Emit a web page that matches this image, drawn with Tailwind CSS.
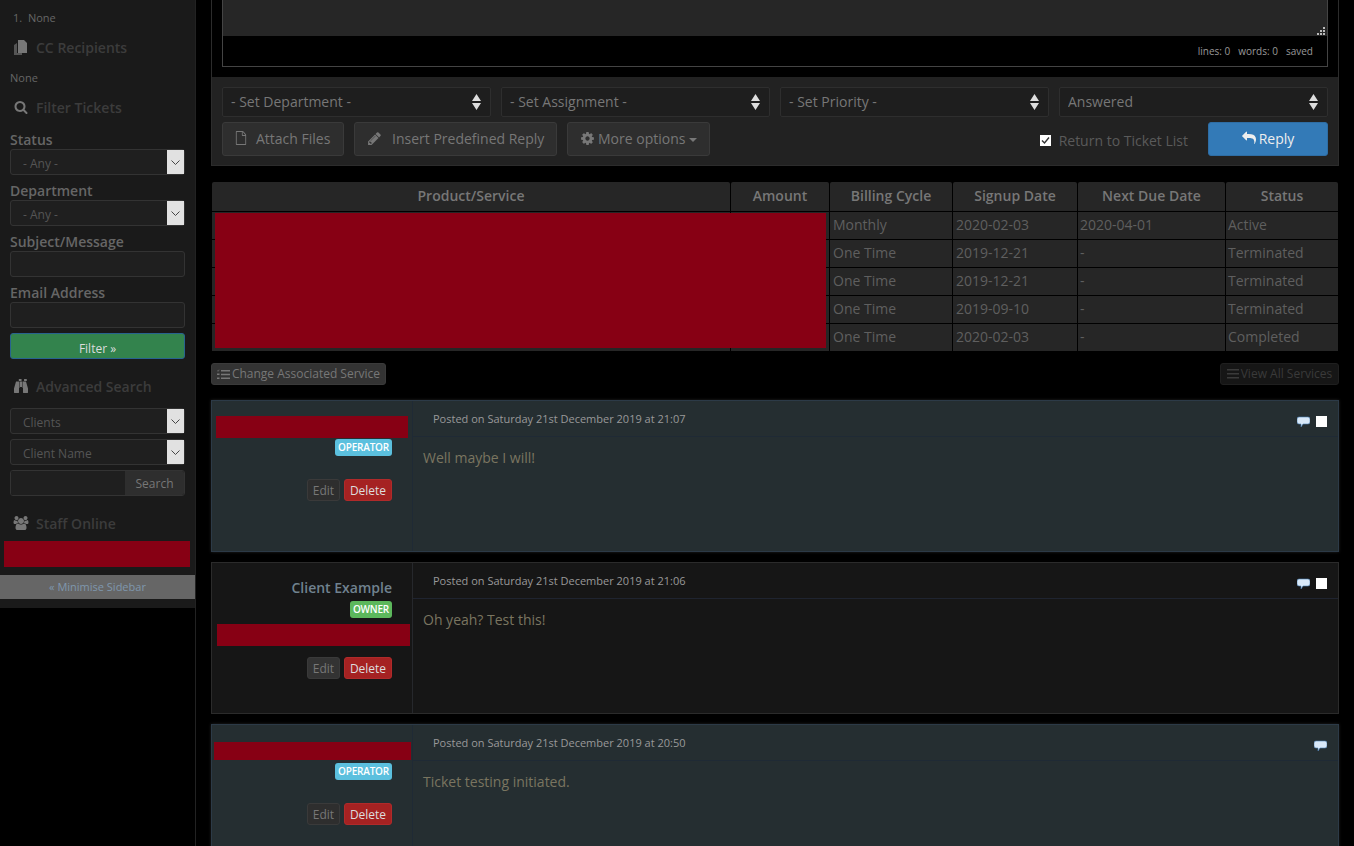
<!DOCTYPE html>
<html lang="en">
<head>
    <meta charset="UTF-8">
    <meta name="viewport" content="width=device-width, initial-scale=1.0">
    <title>View Ticket</title>
    <script src="https://cdn.jsdelivr.net/npm/@tailwindcss/browser@4"></script>
</head>
<body class="bg-black h-[846px] overflow-hidden font-['Open_Sans',sans-serif] flex items-start">
    <!-- Sidebar -->
    <aside class="w-[196px] shrink-0 h-[846px] border-r border-[#222]">
        <div class="h-[608px] bg-[#1a1a1a] relative">
            <div class="h-[35px] pt-[11px] pl-[13px] text-[11px] leading-[14px] text-[#666]">1.&nbsp; None</div>
            <div class="h-[24px] pl-[14px] flex items-center gap-[8px] text-[14px] font-semibold text-[#3c3c3c]">
                <svg class="w-[14px] h-[15px]" viewBox="0 0 14 15"><path d="M0 5l3-2v10h5v2H0z" fill="#555"/><path d="M4 0h6l3 3v10H4z" fill="#777"/></svg>
                <span>CC Recipients</span>
            </div>
            <div class="h-[36px] pt-[12px] pl-[10px] text-[11px] leading-[14px] text-[#666]">None</div>
            <div class="h-[24px] pl-[14px] flex items-center gap-[8px] text-[14px] font-semibold text-[#3c3c3c]">
                <svg class="w-[14px] h-[14px] text-[#777]" viewBox="0 0 1792 1792" fill="currentColor"><path d="M1216 832q0-185-131.500-316.500t-316.500-131.500-316.500 131.500-131.500 316.500 131.500 316.500 316.500 131.500 316.500-131.500 131.500-316.500zm512 832q0 52-38 90t-90 38q-54 0-90-38l-343-342q-179 124-399 124-143 0-273.500-55.500t-225-150-150-225-55.500-273.500 55.500-273.500 150-225 225-150 273.500-55.500 273.500 55.500 225 150 150 225 55.500 273.500q0 220-124 399l343 343q37 37 37 90z"/></svg>
                <span>Filter Tickets</span>
            </div>
            <div class="px-[10px] pt-[11px]">
                <div class="text-[14px] leading-[20px] font-semibold text-[#666] h-[19px]">Status</div>
                <div class="relative h-[26px] mb-[6px]">
                    <select class="appearance-none w-full h-full bg-[#1f1f1f] border border-[#333] rounded-[3px] pl-[12px] pt-[3px] text-[12px] text-[#555]"><option>- Any -</option></select>
                    <span class="absolute right-[1px] top-[1px] w-[17px] h-[24px] bg-[#e1e1e1] flex items-center justify-center"><svg class="w-[9px] h-[5px]" viewBox="0 0 9 5" fill="none" stroke="#444"><path d="M.5.5l4 4 4-4"/></svg></span>
                </div>
                <div class="text-[14px] leading-[20px] font-semibold text-[#666] h-[19px]">Department</div>
                <div class="relative h-[26px] mb-[6px]">
                    <select class="appearance-none w-full h-full bg-[#1f1f1f] border border-[#333] rounded-[3px] pl-[12px] pt-[3px] text-[12px] text-[#555]"><option>- Any -</option></select>
                    <span class="absolute right-[1px] top-[1px] w-[17px] h-[24px] bg-[#e1e1e1] flex items-center justify-center"><svg class="w-[9px] h-[5px]" viewBox="0 0 9 5" fill="none" stroke="#444"><path d="M.5.5l4 4 4-4"/></svg></span>
                </div>
                <div class="text-[14px] leading-[20px] font-semibold text-[#666] h-[19px]">Subject/Message</div>
                <div class="h-[26px] mb-[6px] bg-[#1f1f1f] border border-[#333] rounded-[3px]"></div>
                <div class="text-[14px] leading-[20px] font-semibold text-[#666] h-[19px]">Email Address</div>
                <div class="h-[26px] bg-[#1f1f1f] border border-[#333] rounded-[3px]"></div>
                <button class="block mt-[5px] w-full h-[26px] pt-[5px] leading-[16px] bg-[#33834d] border border-[#28638f] rounded-[3px] text-[12px] text-[#ddd]">Filter »</button>
            </div>
            <div class="h-[24px] mt-[15px] pl-[14px] flex items-center gap-[8px] text-[14px] font-semibold text-[#3c3c3c]">
                <svg class="w-[14px] h-[14px] text-[#777]" viewBox="0 0 1792 1792" fill="currentColor"><path d="M704 320v768q0 26-19 45t-45 19v576q0 26-19 45t-45 19h-512q-26 0-45-19t-19-45v-512l249-873q7-23 31-23h424zm320 0v704h-256v-704h256zm768 896v512q0 26-19 45t-45 19h-512q-26 0-45-19t-19-45v-576q-26 0-45-19t-19-45v-768h424q24 0 31 23zm-826-1184v224h-352v-224q0-14 9-23t23-9h288q14 0 23 9t9 23zm672 0v224h-352v-224q0-14 9-23t23-9h288q14 0 23 9t9 23z"/></svg>
                <span>Advanced Search</span>
            </div>
            <div class="px-[10px] pt-[10px]">
                <div class="relative h-[26px] mb-[5px]">
                    <select class="appearance-none w-full h-full bg-[#1f1f1f] border border-[#333] rounded-[3px] pl-[12px] pt-[3px] text-[12px] text-[#555]"><option>Clients</option></select>
                    <span class="absolute right-[1px] top-[1px] w-[17px] h-[24px] bg-[#e1e1e1] flex items-center justify-center"><svg class="w-[9px] h-[5px]" viewBox="0 0 9 5" fill="none" stroke="#444"><path d="M.5.5l4 4 4-4"/></svg></span>
                </div>
                <div class="relative h-[26px] mb-[5px]">
                    <select class="appearance-none w-full h-full bg-[#1f1f1f] border border-[#333] rounded-[3px] pl-[12px] pt-[3px] text-[12px] text-[#555]"><option>Client Name</option></select>
                    <span class="absolute right-[1px] top-[1px] w-[17px] h-[24px] bg-[#e1e1e1] flex items-center justify-center"><svg class="w-[9px] h-[5px]" viewBox="0 0 9 5" fill="none" stroke="#444"><path d="M.5.5l4 4 4-4"/></svg></span>
                </div>
                <div class="flex h-[26px] border border-[#333] rounded-[3px] overflow-hidden">
                    <div class="flex-1 bg-[#1f1f1f]"></div>
                    <div class="w-[59px] pt-[2px] bg-[#2e2e2e] text-[12px] text-[#777] flex items-center justify-center">Search</div>
                </div>
            </div>
            <div class="h-[24px] mt-[15px] pl-[12px] flex items-center gap-[6px] text-[14px] font-semibold text-[#3c3c3c]">
                <svg class="w-[18px] h-[14px] text-[#777]" viewBox="0 0 1920 1792" fill="currentColor"><path d="M593 896q-162 5-265 128h-134q-82 0-138-40.500t-56-118.500q0-353 124-353 6 0 43.500 21t97.500 42.500 119 21.500q67 0 133-23-5 37-5 66 0 139 81 256zm1071 637q0 120-73 189.500t-194 69.500h-874q-121 0-194-69.500t-73-189.500q0-53 3.500-103.500t14-109 26.500-108.500 43-97.500 62-81 85.500-53.500 111.500-20q10 0 43 21.500t73 48 107 48 135 21.500 135-21.500 107-48 73-48 43-21.500q61 0 111.500 20t85.500 53.500 62 81 43 97.500 26.500 108.500 14 109 3.500 103.500zm-1024-1277q0 106-75 181t-181 75-181-75-75-181 75-181 181-75 181 75 75 181zm704 384q0 159-112.500 271.500t-271.500 112.500-271.500-112.500-112.500-271.500 112.500-271.500 271.500-112.500 271.500 112.500 112.500 271.500zm576 225q0 78-56 118.500t-138 40.500h-134q-103-123-265-128 81-117 81-256 0-29-5-66 66 23 133 23 59 0 119-21.500t97.500-42.500 43.500-21q124 0 124 353zm-128-609q0 106-75 181t-181 75-181-75-75-181 75-181 181-75 181 75 75 181z"/></svg>
                <span>Staff Online</span>
            </div>
            <div class="mt-[6px] mx-[4px] w-[186px] h-[26px] bg-[#870014]"></div>
            <div class="mt-[8px] h-[24px] bg-[#666] flex items-center justify-center text-[11px] text-[#7f97ad]">« Minimise Sidebar</div>
        </div>
    </aside>

    <!-- Main -->
    <main class="w-[1128px] ml-[15px] shrink-0">
        <!-- Reply form -->
        <div class="border-x border-b border-[#2c2c2c]">
            <div class="h-[77px] px-[10px] bg-black">
                <div class="h-[67px] w-[1106px] border-x border-b border-[#444]">
                    <div class="h-[36px] bg-[#262626] relative">
                        <svg class="absolute right-[2px] bottom-[1px] w-[8px] h-[8px]" viewBox="0 0 8 8" fill="#bbb"><path d="M6 0h2v2H6zM3 3h2v2H3zM6 3h2v2H6zM0 6h2v2H0zM3 6h2v2H3zM6 6h2v2H6z"/></svg>
                    </div>
                    <div class="h-[30px] flex items-center justify-end gap-[8px] pr-[14px] text-[10px] text-[#999]">
                        <span>lines: 0</span><span>words: 0</span><span>saved</span>
                    </div>
                </div>
            </div>
            <div class="h-[88px] bg-[#222] px-[10px] pt-[10px]">
                <div class="grid grid-cols-4 gap-[10px] w-[1106px]">
                    <div class="relative h-[30px]">
                        <select class="appearance-none w-full h-full bg-[#1e1e1e] border border-[#2e2e2e] rounded-[2px] pl-[8px] pb-[2px] text-[14px] text-[#777]"><option>- Set Department -</option></select>
                        <svg class="absolute right-[10px] top-[7px] w-[9px] h-[16px]" viewBox="0 0 9 16" fill="#ddd"><path d="M4.500 0L9 7H0zM0 9h9l-4.500 7z"/></svg>
                    </div>
                    <div class="relative h-[30px]">
                        <select class="appearance-none w-full h-full bg-[#1e1e1e] border border-[#2e2e2e] rounded-[2px] pl-[8px] pb-[2px] text-[14px] text-[#777]"><option>- Set Assignment -</option></select>
                        <svg class="absolute right-[10px] top-[7px] w-[9px] h-[16px]" viewBox="0 0 9 16" fill="#ddd"><path d="M4.500 0L9 7H0zM0 9h9l-4.500 7z"/></svg>
                    </div>
                    <div class="relative h-[30px]">
                        <select class="appearance-none w-full h-full bg-[#1e1e1e] border border-[#2e2e2e] rounded-[2px] pl-[8px] pb-[2px] text-[14px] text-[#777]"><option>- Set Priority -</option></select>
                        <svg class="absolute right-[10px] top-[7px] w-[9px] h-[16px]" viewBox="0 0 9 16" fill="#ddd"><path d="M4.500 0L9 7H0zM0 9h9l-4.500 7z"/></svg>
                    </div>
                    <div class="relative h-[30px]">
                        <select class="appearance-none w-full h-full bg-[#1e1e1e] border border-[#2e2e2e] rounded-[2px] pl-[8px] pb-[2px] text-[14px] text-[#777]"><option>Answered</option></select>
                        <svg class="absolute right-[10px] top-[7px] w-[9px] h-[16px]" viewBox="0 0 9 16" fill="#ddd"><path d="M4.500 0L9 7H0zM0 9h9l-4.500 7z"/></svg>
                    </div>
                </div>
                <div class="flex items-center mt-[5px] w-[1106px] h-[34px] text-[14px]">
                    <button class="h-[34px] w-[122px] pb-[2px] bg-[#2e2e2e] border border-[#3a3a3a] rounded-[3px] text-[#777] flex items-center pl-[12px] gap-[9px]">
                        <svg class="w-[12px] h-[14px]" viewBox="0 0 1792 1792" fill="currentColor" preserveAspectRatio="none"><path d="M1596 380q28 28 48 76t20 88v1152q0 40-28 68t-68 28h-1344q-40 0-68-28t-28-68v-1600q0-40 28-68t68-28h896q40 0 88 20t76 48zm-444-244v376h376q-10-29-22-41l-313-313q-12-12-41-22zm384 1528v-1024h-416q-40 0-68-28t-28-68v-416h-768v1536h1280z"/></svg>
                        Attach Files
                    </button>
                    <button class="ml-[10px] h-[34px] w-[203px] pb-[2px] bg-[#2e2e2e] border border-[#3a3a3a] rounded-[3px] text-[#777] flex items-center pl-[12px] gap-[10px]">
                        <svg class="w-[15px] h-[15px]" viewBox="0 0 1792 1792" fill="currentColor"><path d="M491 1536l91-91-235-235-91 91v107h128v128h107zm523-928q0-22-22-22-10 0-17 7l-542 542q-7 7-7 17 0 22 22 22 10 0 17-7l542-542q7-7 7-17zm-54-192l416 416-832 832h-416v-416zm683 96q0 53-37 90l-166 166-416-416 166-165q36-38 90-38 53 0 91 38l235 234q37 39 37 91z"/></svg>
                        Insert Predefined Reply
                    </button>
                    <button class="ml-[10px] h-[34px] w-[143px] pb-[2px] bg-[#2e2e2e] border border-[#3a3a3a] rounded-[3px] text-[#777] flex items-center pl-[12px] gap-[3px]">
                        <svg class="w-[15px] h-[15px]" viewBox="0 0 1792 1792" fill="currentColor"><path d="M1152 896q0-106-75-181t-181-75-181 75-75 181 75 181 181 75 181-75 75-181zm512-109v222q0 12-8 23t-20 13l-185 28q-19 54-39 91 35 50 107 138 10 12 10 25t-9 23q-27 37-99 108t-94 71q-12 0-26-9l-138-108q-44 23-91 38-16 136-29 186-7 28-36 28h-222q-14 0-24.500-8.500t-11.500-21.500l-28-184q-49-16-90-37l-141 107q-10 9-25 9-14 0-25-11-126-114-165-168-7-10-7-23 0-12 8-23 15-21 51-66.500t54-70.500q-27-50-41-99l-183-27q-13-2-21-12.500t-8-23.500v-222q0-12 8-23t19-13l186-28q14-46 39-92-40-57-107-138-10-12-10-24 0-10 9-23 26-36 98.500-107.500t94.500-71.500q13 0 26 10l138 107q44-23 91-38 16-136 29-186 7-28 36-28h222q14 0 24.500 8.500t11.500 21.500l28 184q49 16 90 37l142-107q9-9 24-9 13 0 25 10 129 119 165 170 7 8 7 22 0 12-8 23-15 21-51 66.500t-54 70.500q26 50 41 98l183 28q13 2 21 12.500t8 23.500z"/></svg>
                        More options
                        <span class="ml-[1px] mt-[4px] border-x-[4px] border-x-transparent border-t-[4px] border-t-[#777]"></span>
                    </button>
                    <div class="ml-auto flex items-center pt-[2px] text-[#5a5a5a]">
                        <span class="w-[11px] h-[11px] bg-white flex items-center justify-center">
                            <svg class="w-[9px] h-[9px]" viewBox="0 0 9 9" fill="none" stroke="#333" stroke-width="1.400"><path d="M1 4.500l2.500 2.500L8 1.500"/></svg>
                        </span>
                        <span class="ml-[8px]">Return to Ticket List</span>
                    </div>
                    <button class="ml-[20px] h-[34px] w-[120px] pb-[2px] bg-[#337ab7] border border-[#2e6da4] rounded-[3px] text-[#eee] flex items-center justify-center gap-[3px]">
                        <svg class="w-[14px] h-[14px]" viewBox="0 0 1792 1792" fill="currentColor"><path d="M1792 1120q0 166-127 451-3 7-10.500 24t-13.500 30-13 22q-12 17-28 17-15 0-23.500-10t-8.500-25q0-9 2.500-26.500t2.500-23.500q5-68 5-123 0-101-17.500-181t-48.500-138.500-80-101-105.500-69.500-133-42.500-154-21.500-175.500-6h-224v256q0 26-19 45t-45 19-45-19l-512-512q-19-19-19-45t19-45l512-512q19-19 45-19t45 19 19 45v256h224q713 0 875 403 53 134 53 333z"/></svg>
                        Reply
                    </button>
                </div>
            </div>
        </div>

        <!-- Related services -->
        <div class="relative mt-[16px]">
            <table class="w-[1128px] table-fixed border-separate border-spacing-x-[1px] border-spacing-y-0 text-[14px] text-[#5f5f5f]">
                <thead>
                    <tr class="h-[29px] text-[#777] font-semibold">
                        <th class="w-[518px] pb-[3px] bg-[#262626] rounded-t-[2px] font-semibold">Product/Service</th>
                        <th class="w-[98px] pb-[3px] bg-[#262626] rounded-t-[2px] font-semibold">Amount</th>
                        <th class="w-[122px] pb-[3px] bg-[#262626] rounded-t-[2px] font-semibold">Billing Cycle</th>
                        <th class="w-[124px] pb-[3px] bg-[#262626] rounded-t-[2px] font-semibold">Signup Date</th>
                        <th class="w-[147px] pb-[3px] bg-[#262626] rounded-t-[2px] font-semibold">Next Due Date</th>
                        <th class="pb-[3px] bg-[#262626] rounded-t-[2px] font-semibold">Status</th>
                    </tr>
                </thead>
                <tbody>
                    <tr class="h-[28px]">
                        <td class="bg-[#262626] border-t border-black"></td><td class="bg-[#262626] border-t border-black"></td>
                        <td class="bg-[#262626] border-t border-black pl-[3px] pb-[2px]">Monthly</td><td class="bg-[#262626] border-t border-black pl-[3px] pb-[2px]">2020-02-03</td><td class="bg-[#262626] border-t border-black pl-[2px] pb-[2px]">2020-04-01</td><td class="bg-[#262626] border-t border-black pl-[2px] pb-[2px]">Active</td>
                    </tr>
                    <tr class="h-[28px]">
                        <td class="bg-[#262626] border-t border-black"></td><td class="bg-[#262626] border-t border-black"></td>
                        <td class="bg-[#262626] border-t border-black pl-[3px] pb-[2px]">One Time</td><td class="bg-[#262626] border-t border-black pl-[3px] pb-[2px]">2019-12-21</td><td class="bg-[#262626] border-t border-black pl-[2px] pb-[2px]">-</td><td class="bg-[#262626] border-t border-black pl-[2px] pb-[2px]">Terminated</td>
                    </tr>
                    <tr class="h-[28px]">
                        <td class="bg-[#262626] border-t border-black"></td><td class="bg-[#262626] border-t border-black"></td>
                        <td class="bg-[#262626] border-t border-black pl-[3px] pb-[2px]">One Time</td><td class="bg-[#262626] border-t border-black pl-[3px] pb-[2px]">2019-12-21</td><td class="bg-[#262626] border-t border-black pl-[2px] pb-[2px]">-</td><td class="bg-[#262626] border-t border-black pl-[2px] pb-[2px]">Terminated</td>
                    </tr>
                    <tr class="h-[28px]">
                        <td class="bg-[#262626] border-t border-black"></td><td class="bg-[#262626] border-t border-black"></td>
                        <td class="bg-[#262626] border-t border-black pl-[3px] pb-[2px]">One Time</td><td class="bg-[#262626] border-t border-black pl-[3px] pb-[2px]">2019-09-10</td><td class="bg-[#262626] border-t border-black pl-[2px] pb-[2px]">-</td><td class="bg-[#262626] border-t border-black pl-[2px] pb-[2px]">Terminated</td>
                    </tr>
                    <tr class="h-[28px]">
                        <td class="bg-[#262626] border-t border-black"></td><td class="bg-[#262626] border-t border-black"></td>
                        <td class="bg-[#262626] border-t border-black pl-[3px] pb-[2px]">One Time</td><td class="bg-[#262626] border-t border-black pl-[3px] pb-[2px]">2020-02-03</td><td class="bg-[#262626] border-t border-black pl-[2px] pb-[2px]">-</td><td class="bg-[#262626] border-t border-black pl-[2px] pb-[2px]">Completed</td>
                    </tr>
                </tbody>
            </table>
            <!-- redacted block over the first two columns -->
            <div class="absolute left-[4px] top-[31px] w-[611px] h-[135px] bg-[#870014]"></div>
        </div>

        <div class="flex justify-between mt-[12px] h-[22px] text-[12px]">
            <button class="w-[175px] bg-[#333] border border-[#3a3a3a] rounded-[3px] text-[#777] flex items-center justify-center gap-[2px]">
                <svg class="w-[13px] h-[11px]" viewBox="0 0 13 11" fill="currentColor"><path d="M4 1h9v1.500H4zM4 4.750h9v1.500H4zM4 8.500h9V10H4zM0 1l1 1 1-1.500.5.500L1 2.800 0 1.500zM0 4.500h2.500V6H0zM0 8.500h2.500V10H0z"/></svg>
                Change Associated Service
            </button>
            <button class="w-[119px] bg-[#161616] border border-[#1f1f1f] rounded-[3px] text-[#3a3a3a] flex items-center justify-center gap-[2px]">
                <svg class="w-[12px] h-[10px]" viewBox="0 0 12 10" fill="currentColor"><path d="M0 0h12v1.500H0zM0 4h12v1.500H0zM0 8h12v1.500H0z"/></svg>
                View All Services
            </button>
        </div>

        <!-- Replies -->
        <div class="mt-[15px] flex flex-col gap-[10px]">
            <article class="h-[152px] flex bg-[#252e31] border border-[#2c3a47] shadow-[0_0_3px_#222]">
                <div class="w-[201px] shrink-0 border-r border-[#1f2a35] relative pr-[20px] text-right">
                    <div class="absolute left-[4px] top-[15px] w-[192px] h-[22px] bg-[#870014]"></div>
                    <div class="pt-[38px]"><span class="block ml-auto w-[57px] h-[17px] rounded-[3px] bg-[#5bc0de] text-white text-[10px] tracking-[-0.2px] leading-[17px] font-semibold text-center">OPERATOR</span></div>
                    <div class="mt-[23px] flex justify-end gap-[4px] text-[12px]">
                        <span class="h-[22px] w-[33px] leading-[22px] text-center bg-[#2e2e2e] border border-[#3a3a3a] rounded-[3px] text-[#777]">Edit</span>
                        <span class="h-[22px] w-[48px] leading-[22px] text-center bg-[#a52222] border border-[#b02a2a] rounded-[3px] text-[#ddd]">Delete</span>
                    </div>
                </div>
                <div class="flex-1">
                    <div class="h-[36px] pt-[2px] pl-[20px] pr-[11px] border-b border-[#1f2a35] flex items-center justify-between text-[11px] text-[#999]">
                        <span>Posted on Saturday 21st December 2019 at 21:07</span>
                        <span class="flex items-center gap-[6px] mt-[4px]">
                            <svg class="w-[13px] h-[12px]" viewBox="0 0 13 12"><path d="M2 1h9q2 0 2 2v3q0 2-2 2H6l-2 3V8H2Q0 8 0 6V3q0-2 2-2z" fill="#d8e8f8" stroke="#4a7fb5" stroke-width=".6"/></svg>
                            <span class="w-[11px] h-[11px] bg-white"></span>
                        </span>
                    </div>
                    <p class="pt-[11px] pl-[10px] text-[14px] leading-[20px] text-[#7a7560]">Well maybe I will!</p>
                </div>
            </article>

            <article class="h-[152px] flex bg-[#161616] border border-[#2b2b2b]">
                <div class="w-[201px] shrink-0 border-r border-[#26282c] relative pr-[20px] text-right">
                    <div class="pt-[15px] text-[14px] leading-[20px] font-semibold text-[#70828f]">Client Example</div>
                    <div class="pt-[3px]"><span class="block ml-auto w-[42px] h-[17px] rounded-[3px] bg-[#5cb85c] text-white text-[10px] tracking-[-0.2px] leading-[17px] font-semibold text-center">OWNER</span></div>
                    <div class="absolute left-[5px] top-[61px] w-[193px] h-[22px] bg-[#870014]"></div>
                    <div class="mt-[39px] flex justify-end gap-[4px] text-[12px]">
                        <span class="h-[22px] w-[33px] leading-[22px] text-center bg-[#333] border border-[#3a3a3a] rounded-[3px] text-[#777]">Edit</span>
                        <span class="h-[22px] w-[48px] leading-[22px] text-center bg-[#a52222] border border-[#b02a2a] rounded-[3px] text-[#ddd]">Delete</span>
                    </div>
                </div>
                <div class="flex-1">
                    <div class="h-[36px] pt-[2px] pl-[20px] pr-[11px] border-b border-[#1f2430] flex items-center justify-between text-[11px] text-[#999]">
                        <span>Posted on Saturday 21st December 2019 at 21:06</span>
                        <span class="flex items-center gap-[6px] mt-[4px]">
                            <svg class="w-[13px] h-[12px]" viewBox="0 0 13 12"><path d="M2 1h9q2 0 2 2v3q0 2-2 2H6l-2 3V8H2Q0 8 0 6V3q0-2 2-2z" fill="#d8e8f8" stroke="#4a7fb5" stroke-width=".6"/></svg>
                            <span class="w-[11px] h-[11px] bg-white"></span>
                        </span>
                    </div>
                    <p class="pt-[11px] pl-[10px] text-[14px] leading-[20px] text-[#7a7560]">Oh yeah? Test this!</p>
                </div>
            </article>

            <article class="h-[152px] flex bg-[#252e31] border border-[#2c3a47] shadow-[0_0_3px_#222]">
                <div class="w-[201px] shrink-0 border-r border-[#1f2a35] relative pr-[20px] text-right">
                    <div class="absolute left-[2px] top-[17px] w-[197px] h-[18px] bg-[#870014]"></div>
                    <div class="pt-[38px]"><span class="block ml-auto w-[57px] h-[17px] rounded-[3px] bg-[#5bc0de] text-white text-[10px] tracking-[-0.2px] leading-[17px] font-semibold text-center">OPERATOR</span></div>
                    <div class="mt-[23px] flex justify-end gap-[4px] text-[12px]">
                        <span class="h-[22px] w-[33px] leading-[22px] text-center bg-[#2e2e2e] border border-[#3a3a3a] rounded-[3px] text-[#777]">Edit</span>
                        <span class="h-[22px] w-[48px] leading-[22px] text-center bg-[#a52222] border border-[#b02a2a] rounded-[3px] text-[#ddd]">Delete</span>
                    </div>
                </div>
                <div class="flex-1">
                    <div class="h-[36px] pt-[2px] pl-[20px] pr-[11px] border-b border-[#1f2a35] flex items-center justify-between text-[11px] text-[#999]">
                        <span>Posted on Saturday 21st December 2019 at 20:50</span>
                        <span class="flex items-center mt-[4px]">
                            <svg class="w-[13px] h-[12px]" viewBox="0 0 13 12"><path d="M2 1h9q2 0 2 2v3q0 2-2 2H6l-2 3V8H2Q0 8 0 6V3q0-2 2-2z" fill="#d8e8f8" stroke="#4a7fb5" stroke-width=".6"/></svg>
                        </span>
                    </div>
                    <p class="pt-[11px] pl-[10px] text-[14px] leading-[20px] text-[#7a7560]">Ticket testing initiated.</p>
                </div>
            </article>
        </div>
    </main>
</body>
</html>
